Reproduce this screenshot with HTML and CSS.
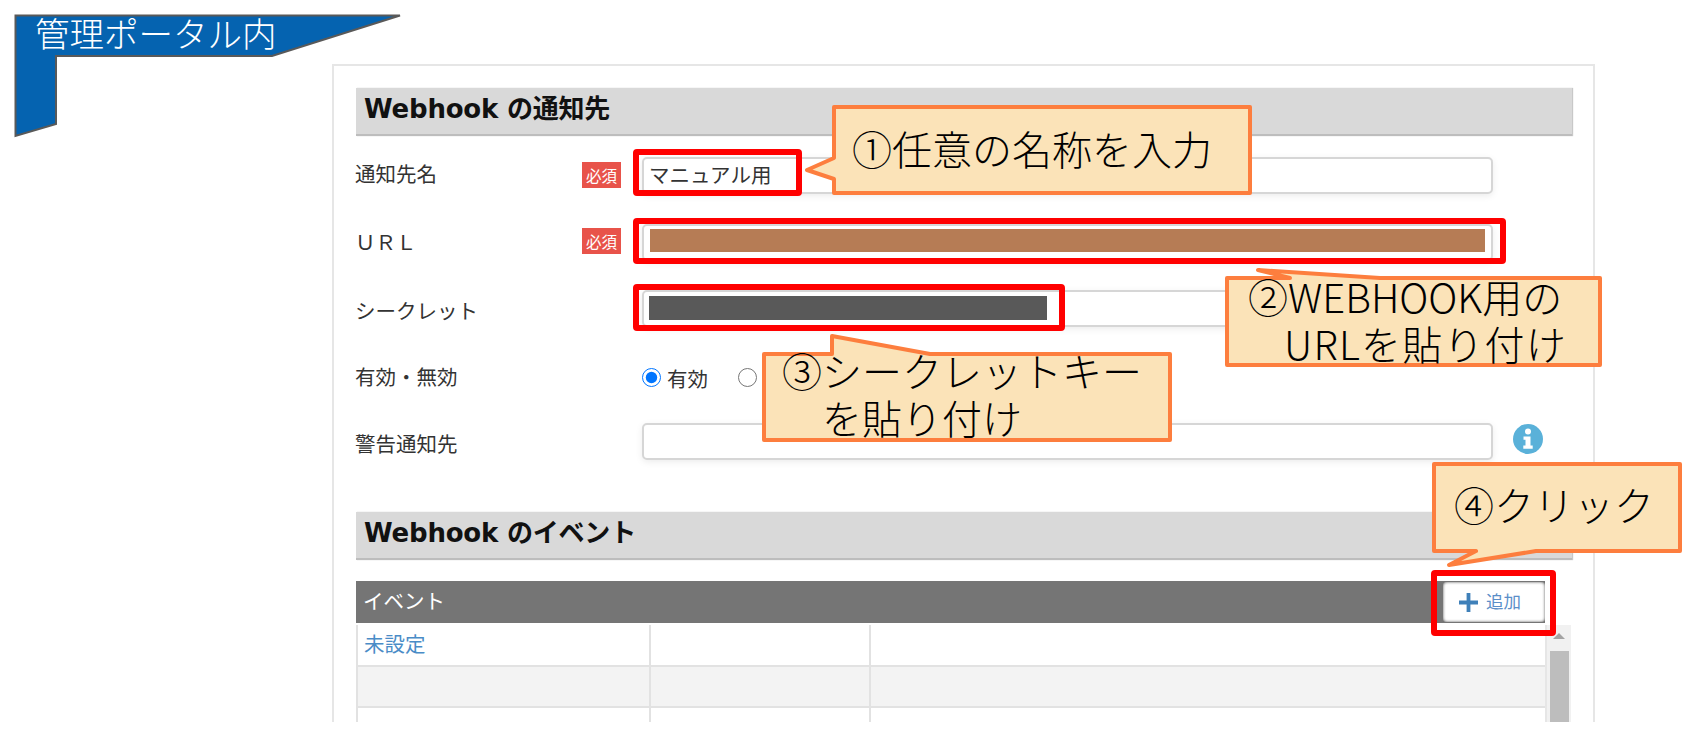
FILE: index.html
```html
<!DOCTYPE html>
<html lang="ja">
<head>
<meta charset="utf-8">
<title>Webhook の通知先</title>
<link rel="stylesheet" href="styles.css">
</head>
<body>
<main class="panel">
  <h2 class="section-head">Webhook の通知先</h2>
  <div class="form">
    <div class="row">
      <span class="label label-first">通知先名</span>
      <span class="badge">必須</span>
      <div class="field">マニュアル用</div>
    </div>
    <div class="row">
      <span class="label label-url">ＵＲＬ</span>
      <span class="badge">必須</span>
      <div class="field"><span class="mask mask-url"></span></div>
    </div>
    <div class="row">
      <span class="label">シークレット</span>
      <span></span>
      <div class="field"><span class="mask mask-secret"></span></div>
    </div>
    <div class="row">
      <span class="label">有効・無効</span>
      <span></span>
      <div class="radios">
        <label class="radio"><input type="radio" name="state" checked>有効</label>
        <label class="radio"><input type="radio" name="state" aria-label="無効"></label>
      </div>
    </div>
    <div class="row">
      <span class="label">警告通知先</span>
      <span></span>
      <div class="field"></div>
      <svg class="info" viewBox="0 0 30 30" aria-hidden="true">
        <circle cx="15" cy="15" r="15" fill="#5ab1d9"/>
        <circle cx="15" cy="7.600" r="3" fill="#fff"/>
        <path d="M10.500 12.500h7v9h2.200v3.200h-9.400v-3.200h2.200v-5.800h-2z" fill="#fff"/>
      </svg>
    </div>
  </div>

  <h2 class="section-head section-events">Webhook のイベント</h2>
  <div class="events">
    <div class="events-head">
      <span class="events-title">イベント</span>
      <button class="add" type="button">
        <svg class="plus" viewBox="0 0 20 20" aria-hidden="true"><path d="M8 0h4v8h8v4h-8v8H8v-8H0V8h8z" fill="#3f80b9"/></svg>
        <span class="add-text">追加</span>
      </button>
    </div>
    <div class="events-body">
      <div class="rows">
        <div class="event-row"><a class="event-link">未設定</a><span></span><span></span></div>
        <div class="event-row event-row-alt"><span></span><span></span><span></span></div>
        <div class="event-row"><span></span><span></span><span></span></div>
      </div>
      <div class="scrollbar"><span class="scroll-arrow"></span><span class="scroll-thumb"></span></div>
    </div>
  </div>
</main>

<aside class="banner">
  <svg class="shape" viewBox="0 0 1699 741" aria-hidden="true">
    <path class="banner-path" d="M15.500 15.500H400L272 56H56V124L15.500 136Z"/>
  </svg>
  <span class="banner-text">管理ポータル内</span>
</aside>

<aside class="notes">
  <svg class="shape" viewBox="0 0 1699 741" aria-hidden="true">
    <rect class="red" x="636" y="152" width="163" height="41" rx="1"/>
    <rect class="red" x="636" y="221" width="867" height="40" rx="1"/>
    <rect class="red" x="636" y="287" width="426" height="41" rx="1"/>
    <rect class="red" x="1434" y="573" width="119" height="60" rx="1"/>
    <path class="note" d="M834 107H1250V193H834V179L807 170L834 158Z"/>
    <path class="note" d="M1227 278H1290L1258 270L1380 278H1600V365H1227Z"/>
    <path class="note" d="M764 354H832V336L930 354H1170V440H764Z"/>
    <path class="note" d="M1434 464H1680V551H1536L1449 565L1476 551H1434Z"/>
  </svg>
  <p class="note-text note-1">①任意の名称を入力</p>
  <p class="note-text note-2">②WEBHOOK用の<br><span class="indent">URLを貼り付け</span></p>
  <p class="note-text note-3">③シークレットキー<br><span class="indent">を貼り付け</span></p>
  <p class="note-text note-4">④クリック</p>
</aside>
</body>
</html>
```

FILE: styles.css
```css
* { box-sizing: border-box; }

html, body {
  margin: 0;
  height: 100%;
  background: #fff;
  overflow: hidden;
  font-family: "Noto Sans CJK JP", "Noto Sans", sans-serif;
  color: #333;
}

.panel {
  width: 1263px;
  height: 658px;
  margin: 64px 0 0 332px;
  padding: 22px 21px 0 22px;
  border: 2px solid #e6e6e6;
  border-bottom: 0;
  overflow: hidden;
}

.section-head {
  height: 48px;
  margin: 0;
  padding-left: 8px;
  background: #d9d9d9;
  border-bottom: 2px solid #bdbdbd;
  box-shadow: 1px 0 1px #c8c8c8;
  color: #111;
  font: bold 26px/42px "DejaVu Sans", "Noto Sans CJK JP", sans-serif;
  letter-spacing: -0.200px;
}

.section-events { margin-top: 52px; }

.form {
  display: grid;
  row-gap: 29.500px;
  margin-top: 21px;
}

.row {
  display: grid;
  grid-template-columns: 226px 39px 21px 851px 51px;
  align-items: center;
  height: 37px;
}

.row > .field, .row > .radios { grid-column: 4; }

.label {
  margin-left: -1px;
  padding-top: 2px;
  font-size: 20.500px;
  line-height: 30px;
  white-space: nowrap;
}

.label-first { padding-top: 0; padding-bottom: 6px; }
.label-url { padding-top: 0; padding-bottom: 2px; }

.badge {
  height: 26px;
  margin-top: -2px;
  background: #e8534a;
  color: #fff;
  font-size: 15.500px;
  font-weight: 400;
  line-height: 26px;
  text-align: center;
}

.field {
  display: flex;
  align-items: center;
  height: 37px;
  padding: 0 5px 4px;
  background: #fff;
  border: 2px solid #d6d6d6;
  border-radius: 5px;
  box-shadow: 0 2px 7px rgba(0, 0, 0, 0.08);
  font-size: 20.500px;
  color: #333;
}

.mask { display: block; }
.mask-url { width: 835px; height: 23px; margin-left: 1px; background: #b67c55; }
.mask-secret { width: 398px; height: 24px; margin-top: 2px; background: #595959; }

.radios {
  display: flex;
  gap: 30px;
  padding-top: 5px;
}

.radio {
  display: flex;
  align-items: center;
  gap: 6px;
  font-size: 20.500px;
}

.radio input {
  width: 19px;
  height: 19px;
  margin: 0;
}

.info {
  display: block;
  width: 30px;
  height: 30px;
  margin: -6px 0 0 20px;
}

.events { margin-top: 21px; }

.events-head {
  display: flex;
  align-items: center;
  justify-content: space-between;
  width: 1189px;
  height: 42px;
  padding-left: 7px;
  background: #757575;
  color: #fff;
  font-size: 20.500px;
}

.events-title { padding-bottom: 5px; }

.add {
  display: flex;
  align-items: center;
  gap: 8px;
  width: 102px;
  height: 40px;
  padding: 0 0 0 16px;
  background: #fff;
  border: 0;
  border-radius: 4px;
  box-shadow: inset 0 0 3px #555;
  color: #5b8fc9;
  font: 17.500px "Noto Sans CJK JP", sans-serif;
}

.add-text { padding-bottom: 3px; }

.plus { width: 19px; height: 19px; }

.events-body {
  display: flex;
  margin-top: 2px;
}

.rows {
  width: 1189px;
  border-left: 2px solid #e2e2e2;
}

.event-row {
  display: grid;
  grid-template-columns: 293px 220px 1fr;
  height: 41.500px;
  border-bottom: 2px solid #e2e2e2;
  font-size: 20.500px;
  line-height: 36px;
}

.event-row > span, .event-link {
  border-right: 2px solid #e2e2e2;
}

.event-row > :last-child { border-right: 0; }

.event-row-alt { background: #f3f3f3; }

.event-link {
  padding-left: 6px;
  color: #4a8cc7;
}

.scrollbar {
  display: flex;
  flex-direction: column;
  align-items: center;
  width: 26px;
  height: 100px;
  padding-top: 8px;
  background: #f1f1f1;
  border-left: 2px solid #e6e6e6;
}

.scroll-arrow {
  width: 0;
  height: 0;
  border-style: solid;
  border-color: transparent;
  border-width: 0 6px 6px;
  border-bottom-color: #a3a3a3;
}

.scroll-thumb {
  width: 19px;
  flex: 1;
  margin-top: 12px;
  background: #bdbdbd;
}

.banner, .notes {
  position: absolute;
  inset: 0;
  width: 1699px;
  height: 741px;
}

.shape {
  position: absolute;
  inset: 0;
  width: 1699px;
  height: 741px;
}

.banner-path {
  fill: #0563b0;
  stroke: #595959;
  stroke-width: 2;
}

.banner-text {
  position: absolute;
  left: 35px;
  top: 10px;
  color: #fff;
  font-size: 34.500px;
  line-height: 44px;
  font-weight: 300;
}

.red {
  fill: none;
  stroke: #f00;
  stroke-width: 6;
  stroke-linejoin: round;
}

.note {
  fill: #fbe3b8;
  stroke: #fd7e3e;
  stroke-width: 4;
  stroke-linejoin: round;
}

.note-text {
  position: absolute;
  margin: 0;
  color: #000;
  font-size: 40px;
  font-weight: 300;
  line-height: 47px;
  white-space: nowrap;
}

.indent {
  display: inline-block;
  margin-left: 40px;
}

.note-1 { left: 852px; top: 125px; }
.note-2 { left: 1248px; top: 273px; }
.note-2 .indent { margin-left: 36px; letter-spacing: 1.200px; }
.note-3 { left: 782px; top: 347px; }
.note-4 { left: 1454px; top: 481px; }
```
